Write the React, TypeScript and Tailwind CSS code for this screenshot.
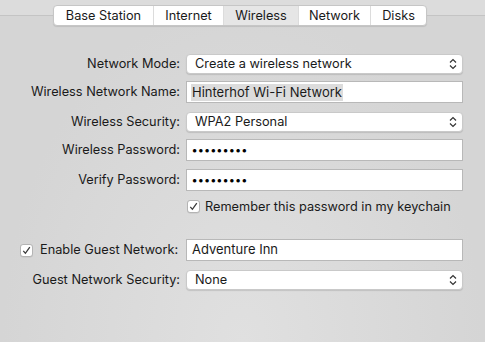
const font = { fontFamily: "Inter, 'Liberation Sans', sans-serif" };

function Chevrons() {
  return (
    <svg width="8" height="12" viewBox="0 0 8 12" fill="none" stroke="#333" strokeWidth="1.2">
      <path d="M1 4.5 L4 1.5 L7 4.5" />
      <path d="M1 7.5 L4 10.5 L7 7.5" />
    </svg>
  );
}

function Check() {
  return (
    <div className="shrink-0 w-[13px] h-[13px] rounded-[3px] bg-white border border-[#b4b4b4] flex items-center justify-center shadow-[0_0.5px_0.5px_rgba(0,0,0,0.1)]">
      <svg width="9" height="9" viewBox="0 0 9 9" fill="none" stroke="#3a3a3a" strokeWidth="1.3">
        <path d="M1.3 4.8 L3.4 7.3 L7.8 1.2" />
      </svg>
    </div>
  );
}

function Popup({ value }: { value: string }) {
  return (
    <div className="w-[277px] h-[20px] rounded-[4px] bg-white border border-[#c9c9c9] shadow-[0_1px_1px_rgba(0,0,0,0.12)] flex items-center justify-between pl-[8px] pr-[5px]">
      <span>{value}</span>
      <Chevrons />
    </div>
  );
}

function Field({ children }: { children: React.ReactNode }) {
  return (
    <div className="w-[277px] h-[22px] bg-white border border-[#b8b8b8] flex items-center pl-[4px]">
      {children}
    </div>
  );
}

function Row({ label, mt, children }: { label: React.ReactNode; mt: string; children: React.ReactNode }) {
  return (
    <div className={`flex items-center ${mt}`}>
      <div className="w-[180px] flex justify-end whitespace-nowrap">{label}</div>
      <div className="ml-[6px]">{children}</div>
    </div>
  );
}

const dots = "•••••••••";

export default function App() {
  return (
    <div
      className="w-[485px] h-[342px] overflow-hidden bg-[radial-gradient(ellipse_at_50%_100%,#e0e0e0,#d5d5d5_70%)] text-[12.75px] text-[#1a1a1a]"
      style={font}
    >
      <div className="h-[16px] bg-[#dcdcdc] border-b border-[#c4c4c4]" />
      <div className="ml-[53px] -mt-[11px] flex w-[374px] h-[21px] bg-white rounded-[4px] border border-[#c6c6c6] shadow-[0_1px_1px_rgba(0,0,0,0.1)] overflow-hidden">
        <div className="w-[100px] flex items-center justify-center border-r border-[#dcdcdc]">Base Station</div>
        <div className="w-[70px] flex items-center justify-center border-r border-[#dcdcdc]">Internet</div>
        <div className="w-[75px] flex items-center justify-center border-r border-[#dcdcdc] bg-[#e6e6e6]">Wireless</div>
        <div className="w-[72px] flex items-center justify-center border-r border-[#dcdcdc]">Network</div>
        <div className="flex-1 flex items-center justify-center">Disks</div>
      </div>

      <Row label="Network Mode:" mt="mt-[28px]">
        <Popup value="Create a wireless network" />
      </Row>
      <Row label="Wireless Network Name:" mt="mt-[7px]">
        <Field>
          <span className="bg-[#dcdcdc] px-[1px] leading-[17px] text-[13px]">Hinterhof Wi-Fi Network</span>
        </Field>
      </Row>
      <Row label="Wireless Security:" mt="mt-[9px]">
        <Popup value="WPA2 Personal" />
      </Row>
      <Row label="Wireless Password:" mt="mt-[7px]">
        <Field>
          <span className="pl-[1px] text-[11px] font-bold tracking-[1px] text-black">{dots}</span>
        </Field>
      </Row>
      <Row label="Verify Password:" mt="mt-[8px]">
        <Field>
          <span className="pl-[1px] text-[11px] font-bold tracking-[1px] text-black">{dots}</span>
        </Field>
      </Row>
      <div className="flex items-center mt-[8px] ml-[187px] h-[15px]">
        <Check />
        <span className="ml-[5px]">Remember this password in my keychain</span>
      </div>

      <div className="flex items-center mt-[25px]">
        <div className="w-[180px] flex items-center pl-[20px] whitespace-nowrap">
          <Check />
          <span className="ml-[7px]">Enable Guest Network:</span>
        </div>
        <div className="ml-[6px]">
          <Field>
            <span className="pl-[1px] text-[13px]">Adventure Inn</span>
          </Field>
        </div>
      </div>
      <Row label="Guest Network Security:" mt="mt-[9px]">
        <Popup value="None" />
      </Row>
    </div>
  );
}
